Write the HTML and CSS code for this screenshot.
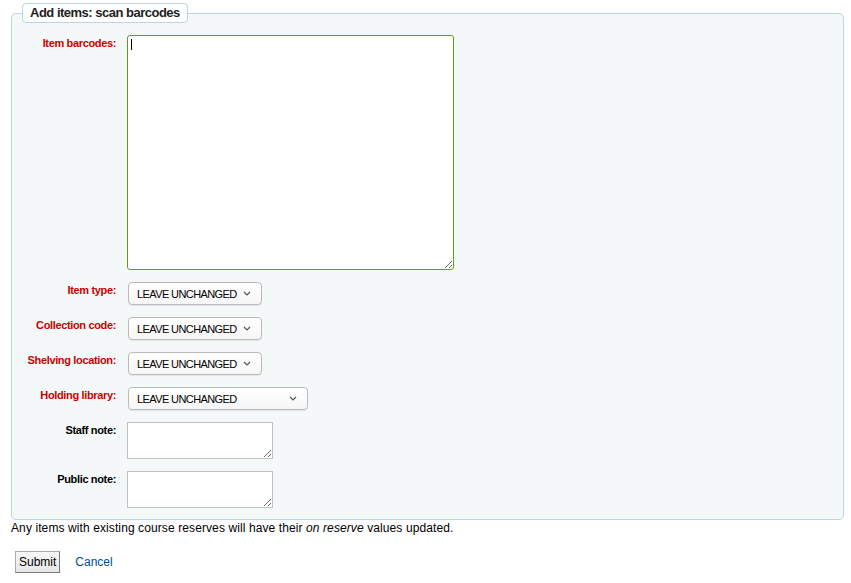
FILE: index.html
```html
<!DOCTYPE html>
<html>
<head>
<meta charset="utf-8">
<link rel="stylesheet" href="styles.css">
</head>
<body>
<form class="page">
  <fieldset class="rows">
    <legend>Add items: scan barcodes</legend>
    <ol class="fields">
      <li class="row">
        <label class="required" for="barcodes">Item barcodes:</label>
        <div class="caret-wrap">
          <textarea id="barcodes" class="big"></textarea>
          <span class="caret"></span>
        </div>
      </li>
      <li class="row">
        <label class="required">Item type:</label>
        <div class="select"><span>LEAVE UNCHANGED</span><svg class="chev" viewBox="0 0 8 5" width="8" height="5"><path d="M1 1l3 3 3-3" fill="none" stroke="#555" stroke-width="1.2"/></svg></div>
      </li>
      <li class="row">
        <label class="required">Collection code:</label>
        <div class="select"><span>LEAVE UNCHANGED</span><svg class="chev" viewBox="0 0 8 5" width="8" height="5"><path d="M1 1l3 3 3-3" fill="none" stroke="#555" stroke-width="1.2"/></svg></div>
      </li>
      <li class="row">
        <label class="required">Shelving location:</label>
        <div class="select"><span>LEAVE UNCHANGED</span><svg class="chev" viewBox="0 0 8 5" width="8" height="5"><path d="M1 1l3 3 3-3" fill="none" stroke="#555" stroke-width="1.2"/></svg></div>
      </li>
      <li class="row">
        <label class="required">Holding library:</label>
        <div class="select wide"><span>LEAVE UNCHANGED</span><svg class="chev" viewBox="0 0 8 5" width="8" height="5"><path d="M1 1l3 3 3-3" fill="none" stroke="#555" stroke-width="1.2"/></svg></div>
      </li>
      <li class="row">
        <label>Staff note:</label>
        <textarea class="small"></textarea>
      </li>
      <li class="row">
        <label>Public note:</label>
        <textarea class="small"></textarea>
      </li>
    </ol>
  </fieldset>
  <p class="hint">Any items with existing course reserves will have their <i>on reserve</i> values updated.</p>
  <div class="actions">
    <button type="button" class="submit">Submit</button>
    <a href="#" class="cancel">Cancel</a>
  </div>
</form>
</body>
</html>
```

FILE: styles.css
```css
html, body {
  margin: 0;
  padding: 0;
  background: #fff;
}
body {
  font-family: "Liberation Sans", Arial, sans-serif;
  font-size: 12px;
  color: #000;
}
.page {
  padding: 3px 7px 0 11px;
}
.rows {
  margin: 0;
  background: #f4f8f9;
  border: 1px solid #b9d8d9;
  border-radius: 5px;
  padding: 0 0 11px 0;
}
.rows legend {
  margin-left: 10px;
  padding: 2px 7px 2px 7px;
  background: #fff;
  border: 1px solid #b9d8d9;
  border-radius: 4px;
  font-weight: bold;
  font-size: 13px;
  letter-spacing: -0.5px;
  line-height: 14px;
  color: #222;
}
.fields {
  list-style: none;
  margin: 0;
  padding: 12px 0 0 0;
  display: flex;
  flex-direction: column;
  gap: 12px;
}
.row {
  display: flex;
  align-items: flex-start;
}
.row label {
  width: 104px;
  margin-right: 11px;
  text-align: right;
  font-weight: bold;
  font-size: 11px;
  letter-spacing: -0.35px;
  padding-top: 2px;
  line-height: 13px;
  color: #000;
}
.row label.required {
  color: #cc0000;
}
textarea {
  margin: 0;
  padding: 2px 4px;
  box-sizing: border-box;
  font-family: "Liberation Sans", Arial, sans-serif;
  font-size: 12px;
  background: #fff;
  border: 1px solid #c0c0c0;
  border-radius: 0;
  outline: none;
}
.caret-wrap {
  position: relative;
  border: 1px solid #62a010;
  border-radius: 3px;
  background: #fff;
}
textarea.big {
  width: 325px;
  height: 233px;
  display: block;
  border: none;
  background: transparent;
}
.caret {
  position: absolute;
  left: 3px;
  top: 3px;
  width: 1px;
  height: 11px;
  background: #000;
}
textarea.small {
  width: 146px;
  height: 37px;
  display: block;
}
.select {
  box-sizing: border-box;
  margin-left: 1px;
  width: 134px;
  height: 23px;
  display: flex;
  align-items: center;
  justify-content: space-between;
  padding: 0 10px 0 8px;
  background: linear-gradient(#fff, #f6f6f6);
  border: 1px solid #bbb;
  border-radius: 4px;
  box-shadow: 0 1px 1px rgba(0,0,0,0.08);
  font-size: 11px;
  letter-spacing: -0.6px;
  white-space: nowrap;
  color: #000;
}
.select.wide {
  width: 180px;
}
.hint {
  margin: 1px 0 0 0;
  line-height: 15px;
  letter-spacing: 0.1px;
}
.actions {
  display: flex;
  align-items: center;
  gap: 15px;
  padding: 15px 0 0 4px;
}
.submit {
  font-family: "Liberation Sans", Arial, sans-serif;
  font-size: 12px;
  height: 22px;
  padding: 0 3px;
  background: linear-gradient(#f8f8f8, #e6e6e6);
  border: 1px solid #aaa;
  border-right-color: #777;
  border-bottom-color: #777;
  border-radius: 0;
  color: #000;
}
.cancel {
  color: #004d99;
  text-decoration: none;
}
```
